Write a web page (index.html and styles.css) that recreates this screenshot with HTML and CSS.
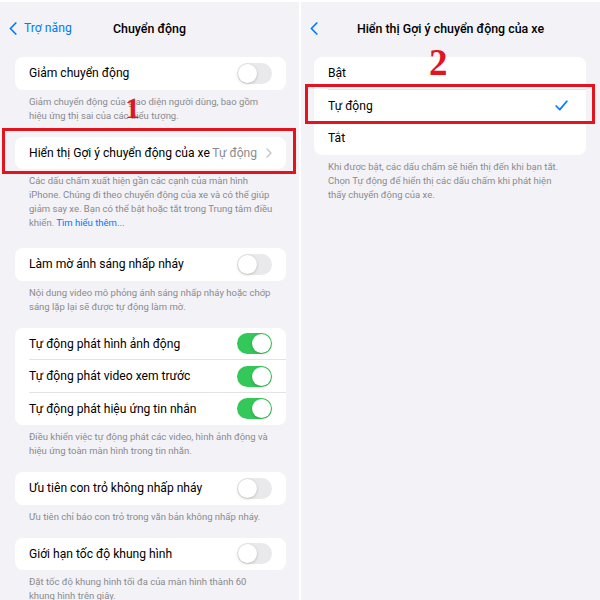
FILE: index.html
```html
<!DOCTYPE html>
<html lang="vi">
<head>
<meta charset="utf-8">
<link rel="stylesheet" href="styles.css">
</head>
<body>
<div class="screens">
  <section class="screen">
    <header class="nav">
      <div class="back">
        <svg class="chev" viewBox="0 0 8 13" width="8" height="13"><path d="M6.8 1 L1.4 6.5 L6.8 12" fill="none" stroke="#007aff" stroke-width="1.7" stroke-linecap="round" stroke-linejoin="round"/></svg>
        <span>Trợ năng</span>
      </div>
      <h1 class="title">Chuyển động</h1>
    </header>

    <div class="group">
      <div class="row"><span class="label">Giảm chuyển động</span><span class="toggle"></span></div>
    </div>
    <p class="foot">Giảm chuyển động của giao diện người dùng, bao gồm hiệu ứng thị sai của các biểu tượng.</p>

    <div class="group">
      <div class="row"><span class="label">Hiển thị Gợi ý chuyển động của xe</span><span class="value">Tự động</span><svg class="disc" viewBox="0 0 6 10" width="6" height="10"><path d="M1 1 L5 5 L1 9" fill="none" stroke="#c4c4c7" stroke-width="1.4" stroke-linecap="round" stroke-linejoin="round"/></svg></div>
    </div>
    <p class="foot f4">Các dấu chấm xuất hiện gần các cạnh của màn hình iPhone. Chúng đi theo chuyển động của xe và có thể giúp giảm say xe. Bạn có thể bật hoặc tắt trong Trung tâm điều khiển. <span class="link">Tìm hiểu thêm...</span></p>

    <div class="group">
      <div class="row"><span class="label">Làm mờ ánh sáng nhấp nháy</span><span class="toggle"></span></div>
    </div>
    <p class="foot">Nội dung video mô phỏng ánh sáng nhấp nháy hoặc chớp sáng lặp lại sẽ được tự động làm mờ.</p>

    <div class="group">
      <div class="row sep"><span class="label">Tự động phát hình ảnh động</span><span class="toggle on"></span></div>
      <div class="row sep"><span class="label">Tự động phát video xem trước</span><span class="toggle on"></span></div>
      <div class="row"><span class="label">Tự động phát hiệu ứng tin nhắn</span><span class="toggle on"></span></div>
    </div>
    <p class="foot">Điều khiển việc tự động phát các video, hình ảnh động và hiệu ứng toàn màn hình trong tin nhắn.</p>

    <div class="group">
      <div class="row"><span class="label">Ưu tiên con trỏ không nhấp nháy</span><span class="toggle"></span></div>
    </div>
    <p class="foot">Ưu tiên chỉ báo con trỏ trong văn bản không nhấp nháy.</p>

    <div class="group">
      <div class="row"><span class="label">Giới hạn tốc độ khung hình</span><span class="toggle"></span></div>
    </div>
    <p class="foot">Đặt tốc độ khung hình tối đa của màn hình thành 60 khung hình trên giây.</p>

    <div class="mark mark1"></div>
    <div class="num num1">1</div>
  </section>

  <section class="screen right">
    <header class="nav">
      <div class="back">
        <svg class="chev" viewBox="0 0 8 13" width="8" height="13"><path d="M6.8 1 L1.4 6.5 L6.8 12" fill="none" stroke="#007aff" stroke-width="1.7" stroke-linecap="round" stroke-linejoin="round"/></svg>
      </div>
      <h1 class="title">Hiển thị Gợi ý chuyển động của xe</h1>
    </header>

    <div class="group">
      <div class="row sep"><span class="label">Bật</span></div>
      <div class="row sep"><span class="label">Tự động</span><svg class="check" viewBox="0 0 13 11" width="13" height="11"><path d="M1.2 6 L4.8 9.6 L11.8 1.2" fill="none" stroke="#007aff" stroke-width="1.7" stroke-linecap="round" stroke-linejoin="round"/></svg></div>
      <div class="row"><span class="label">Tắt</span></div>
    </div>
    <p class="foot fr">Khi được bật, các dấu chấm sẽ hiển thị đến khi bạn tắt. Chọn Tự động để hiển thị các dấu chấm khi phát hiện thấy chuyển động của xe.</p>

    <div class="mark mark2"></div>
    <div class="num num2">2</div>
  </section>
</div>
</body>
</html>
```

FILE: styles.css
```css
* { box-sizing: border-box; }
html, body { margin: 0; padding: 0; background: #ffffff; }
body { font-family: "Roboto", "Liberation Sans", sans-serif; color: #000; }

.screens {
  display: flex;
  gap: 2px;
  padding-top: 2px;
  width: 600px;
  height: 600px;
  overflow: hidden;
}
.screen {
  position: relative;
  width: 299px;
  height: 598px;
  background: #f2f2f7;
  overflow: hidden;
  padding: 0 13px 0 15px;
}
.screen.right { padding: 0 14px 0 13px; }

.nav {
  position: relative;
  height: 52px;
  display: flex;
  align-items: center;
  justify-content: center;
  margin: 0 -13px 0 -15px;
}
.screen.right .nav { margin: 0 -14px 0 -13px; }
.back {
  position: absolute;
  left: 9px;
  top: 0;
  bottom: 0;
  display: flex;
  align-items: center;
  gap: 7px;
  color: #007aff;
  font-size: 12.2px;
}
.title {
  margin: 0;
  font-size: 12.4px;
  font-weight: 500;
}

.group {
  background: #fff;
  border-radius: 8px;
  margin-top: 3px;
}
.row {
  position: relative;
  height: 32.5px;
  display: flex;
  align-items: center;
  padding: 0 14px;
  font-size: 12.1px;
}
.row.sep::after {
  content: "";
  position: absolute;
  left: 14px;
  right: 0;
  bottom: 0;
  height: 1px;
  background: #e3e3e6;
}
.label { flex: 1; white-space: nowrap; }
.value { color: #8a8a8e; margin-right: 9px; white-space: nowrap; }
.disc { display: block; }
.check { display: block; margin-right: 4px; }

.toggle {
  position: relative;
  width: 35px;
  height: 21px;
  border-radius: 11px;
  background: #e9e9eb;
  flex: none;
}
.toggle::after {
  content: "";
  position: absolute;
  top: 1px;
  left: 1px;
  width: 19px;
  height: 19px;
  border-radius: 50%;
  background: #fff;
  box-shadow: 0 1px 3px rgba(0,0,0,0.18), 0 0 0 0.5px rgba(0,0,0,0.04);
}
.toggle.on { background: #34c759; }
.toggle.on::after { left: 15px; }

.foot {
  margin: 0 0 14px;
  padding: 5px 13px 0 14px;
  font-size: 9.5px;
  line-height: 14px;
  color: #8a8a8e;
}
.foot.f4 { margin-bottom: 18px; }
.foot.fr { padding-right: 24px; }
.link { color: #007aff; }

.mark {
  position: absolute;
  border: 3px solid #e3141d;
}
.mark1 { left: 2px; top: 126px; width: 294px; height: 46px; }
.mark2 { left: 4px; top: 82px; width: 290px; height: 40px; }

.num {
  position: absolute;
  font-family: "Liberation Serif", "Times New Roman", serif;
  font-weight: 700;
  color: #e3141d;
  line-height: 1;
}
.num1 { left: 125px; top: 91px; font-size: 30px; }
.num2 { left: 128px; top: 42px; font-size: 37px; }
```
